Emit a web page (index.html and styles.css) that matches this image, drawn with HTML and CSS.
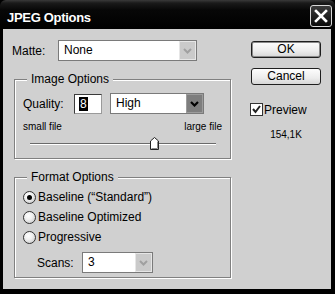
FILE: index.html
```html
<!DOCTYPE html>
<html>
<head>
<meta charset="utf-8">
<link rel="stylesheet" href="styles.css">
</head>
<body>
<div class="window">
  <div class="titlebar">
    <span class="title">JPEG Options</span>
    <div class="close">
      <svg width="14" height="14" viewBox="0 0 14 14"><path d="M2 2 L12 12 M12 2 L2 12" stroke="#fff" stroke-width="2.6" stroke-linecap="square"/></svg>
    </div>
  </div>
  <div class="client">
    <div class="left">
      <div class="row matte-row">
        <span class="matte-lbl">Matte:</span>
        <div class="select light w-matte">
          <span class="sel-text">None</span>
          <span class="sel-btn"><svg width="9" height="6" viewBox="0 0 9 6"><polyline points="1,1 4.5,4.5 8,1" fill="none" stroke="#a0a0a0" stroke-width="2"/></svg></span>
        </div>
      </div>

      <div class="group g-image">
        <div class="legend">Image Options</div>
        <div class="row q-row">
          <span class="q-lbl">Quality:</span>
          <div class="qinput"><span class="hl">8</span></div>
          <div class="select dark w-high">
            <span class="sel-text">High</span>
            <span class="sel-btn"><svg width="9" height="6" viewBox="0 0 9 6"><polyline points="1,1 4.5,4.5 8,1" fill="none" stroke="#000" stroke-width="2.2"/></svg></span>
          </div>
        </div>
        <div class="slider-labels"><span>small file</span><span>large file</span></div>
        <div class="slider">
          <div class="track"></div>
          <div class="thumb" style="left:66.7%">
            <svg width="9" height="13" viewBox="0 0 9 13"><polygon points="0.5,4 4.5,0.5 8.5,4 8.5,12.5 0.5,12.5" fill="#fff" stroke="#222" stroke-width="1"/><polyline points="7.5,4.5 7.5,11.5 1.5,11.5" fill="none" stroke="#8a8a8a" stroke-width="1"/></svg>
          </div>
        </div>
      </div>

      <div class="group g-format">
        <div class="legend">Format Options</div>
        <div class="radio-row"><span class="radio on"></span><span>Baseline (“Standard”)</span></div>
        <div class="radio-row"><span class="radio"></span><span>Baseline Optimized</span></div>
        <div class="radio-row"><span class="radio"></span><span>Progressive</span></div>
        <div class="row scans-row">
          <span class="scans-lbl">Scans:</span>
          <div class="select light w-scans">
            <span class="sel-text">3</span>
            <span class="sel-btn"><svg width="9" height="6" viewBox="0 0 9 6"><polyline points="1,1 4.5,4.5 8,1" fill="none" stroke="#a0a0a0" stroke-width="2"/></svg></span>
          </div>
        </div>
      </div>
    </div>

    <div class="right">
      <div class="btn ok">OK</div>
      <div class="btn cancel">Cancel</div>
      <div class="check-row">
        <span class="checkbox"><svg width="11" height="11" viewBox="0 0 11 11"><polyline points="2,5 4.5,8 9,2" fill="none" stroke="#222" stroke-width="2"/></svg></span>
        <span>Preview</span>
      </div>
      <div class="size">154,1K</div>
    </div>
  </div>
</div>
</body>
</html>
```

FILE: styles.css
```css
* { box-sizing: border-box; }
html, body { margin: 0; padding: 0; }
body {
  width: 335px;
  height: 294px;
  background: #000;
  overflow: hidden;
  font-family: "Liberation Sans", Arial, sans-serif;
  font-size: 12px;
  color: #000;
}
.window {
  width: 335px;
  height: 294px;
  display: flex;
  flex-direction: column;
  background: #000;
}
.titlebar {
  height: 29px;
  flex: none;
  display: flex;
  align-items: flex-start;
  justify-content: space-between;
  padding: 0 3px 0 7px;
  background: linear-gradient(#3a3a3a 0, #1a1a1a 3px, #070707 10px, #000 100%);
  border-radius: 6px 6px 0 0;
}
.title {
  color: #fff;
  font-weight: bold;
  font-size: 13px;
  letter-spacing: -0.3px;
  line-height: 15px;
  margin-top: 10px;
}
.close {
  width: 22px;
  height: 22px;
  margin-top: 5px;
  border: 1px solid #d8d8d8;
  border-radius: 3px;
  background: linear-gradient(#3c3c3c, #0a0a0a);
  display: flex;
  align-items: center;
  justify-content: center;
}
.client {
  flex: 1;
  margin: 0 4px 5px 3px;
  background: #d0d0d0;
  display: flex;
  padding: 11px 0 0 9px;
}
.left {
  width: 220px;
  display: flex;
  flex-direction: column;
}
.row {
  display: flex;
  align-items: center;
}
.matte-row { height: 21px; }
.matte-lbl { width: 46px; }
.select {
  display: flex;
  height: 21px;
  border: 1px solid #7a7a7a;
  background: #fff;
}
.sel-text {
  flex: 1;
  padding-left: 5px;
  line-height: 19px;
}
.sel-btn {
  width: 17px;
  display: flex;
  align-items: center;
  justify-content: center;
}
.light .sel-btn {
  background: #cacaca;
  border: 1px solid #e6e6e6;
}
.dark .sel-btn {
  background: #7e7e7e;
  border: 1px solid #9c9c9c;
}
.w-matte { width: 139px; }
.w-high { width: 94px; margin-left: 8px; }
.w-scans { width: 71px; }

.group {
  margin-left: 2px;
  width: 217px;
  border: 1px solid #808080;
  box-shadow: inset 1px 1px 0 #fff, 1px 1px 0 #fff;
  padding: 0 8px 7px 8px;
  display: flex;
  flex-direction: column;
}
.legend {
  align-self: flex-start;
  margin: -8px 0 7px 4px;
  padding: 0 4px;
  background: #d0d0d0;
  line-height: 14px;
}
.g-image { margin-top: 18px; }
.g-format { margin-top: 18px; padding-bottom: 4px; }
.g-format .legend { margin-bottom: 3px; }

.q-row { height: 21px; }
.q-lbl { width: 51px; }
.qinput {
  width: 28px;
  height: 20px;
  border: 1px solid;
  border-color: #3a3a3a #9a9a9a #9a9a9a #3a3a3a;
  background: #fff;
  padding-left: 4px;
  display: flex;
  align-items: center;
}
.hl {
  background: #000;
  color: #fff;
  padding: 0 1px;
  line-height: 14px;
}
.slider-labels {
  display: flex;
  justify-content: space-between;
  font-size: 10px;
  line-height: 12px;
  margin-top: 7px;
}
.slider {
  position: relative;
  height: 14px;
  margin: 4px 6px 0 7px;
}
.track {
  margin-top: 6px;
  height: 2px;
  border-top: 1px solid #6a6a6a;
  border-bottom: 1px solid #fff;
}
.thumb {
  position: absolute;
  top: 0;
  width: 9px;
  height: 13px;
  margin-left: -4px;
}
.thumb svg { display: block; }

.radio-row {
  height: 20px;
  display: flex;
  align-items: center;
  gap: 2px;
}
.radio {
  width: 13px;
  height: 13px;
  border-radius: 50%;
  border: 1px solid #333;
  background: radial-gradient(circle at 40% 35%, #fff 0, #f0f0f0 40%, #bdbdbd 100%);
  display: flex;
  align-items: center;
  justify-content: center;
}
.radio.on::after {
  content: "";
  width: 5px;
  height: 5px;
  border-radius: 50%;
  background: #000;
}
.scans-row { height: 21px; margin-top: 5px; }
.scans-lbl { width: 45px; margin-left: 14px; }

.right {
  margin-left: 19px;
  width: 70px;
  display: flex;
  flex-direction: column;
}
.btn {
  height: 17px;
  border: 1px solid #1e1e1e;
  border-radius: 3px;
  background: linear-gradient(#fdfdfd, #ececec 60%, #d6d6d6);
  text-align: center;
  line-height: 15px;
}
.ok {
  margin-top: 1px;
  box-shadow: inset 0 0 0 1px #8a8a8a;
}
.cancel { margin-top: 10px; }
.check-row {
  margin-top: 18px;
  margin-left: -1px;
  display: flex;
  align-items: center;
  gap: 1px;
  height: 13px;
}
.checkbox {
  width: 13px;
  height: 13px;
  border: 1px solid #333;
  background: #fff;
  display: flex;
  align-items: center;
  justify-content: center;
}
.size {
  margin-top: 13px;
  text-align: center;
  font-size: 10px;
  line-height: 12px;
}
```
